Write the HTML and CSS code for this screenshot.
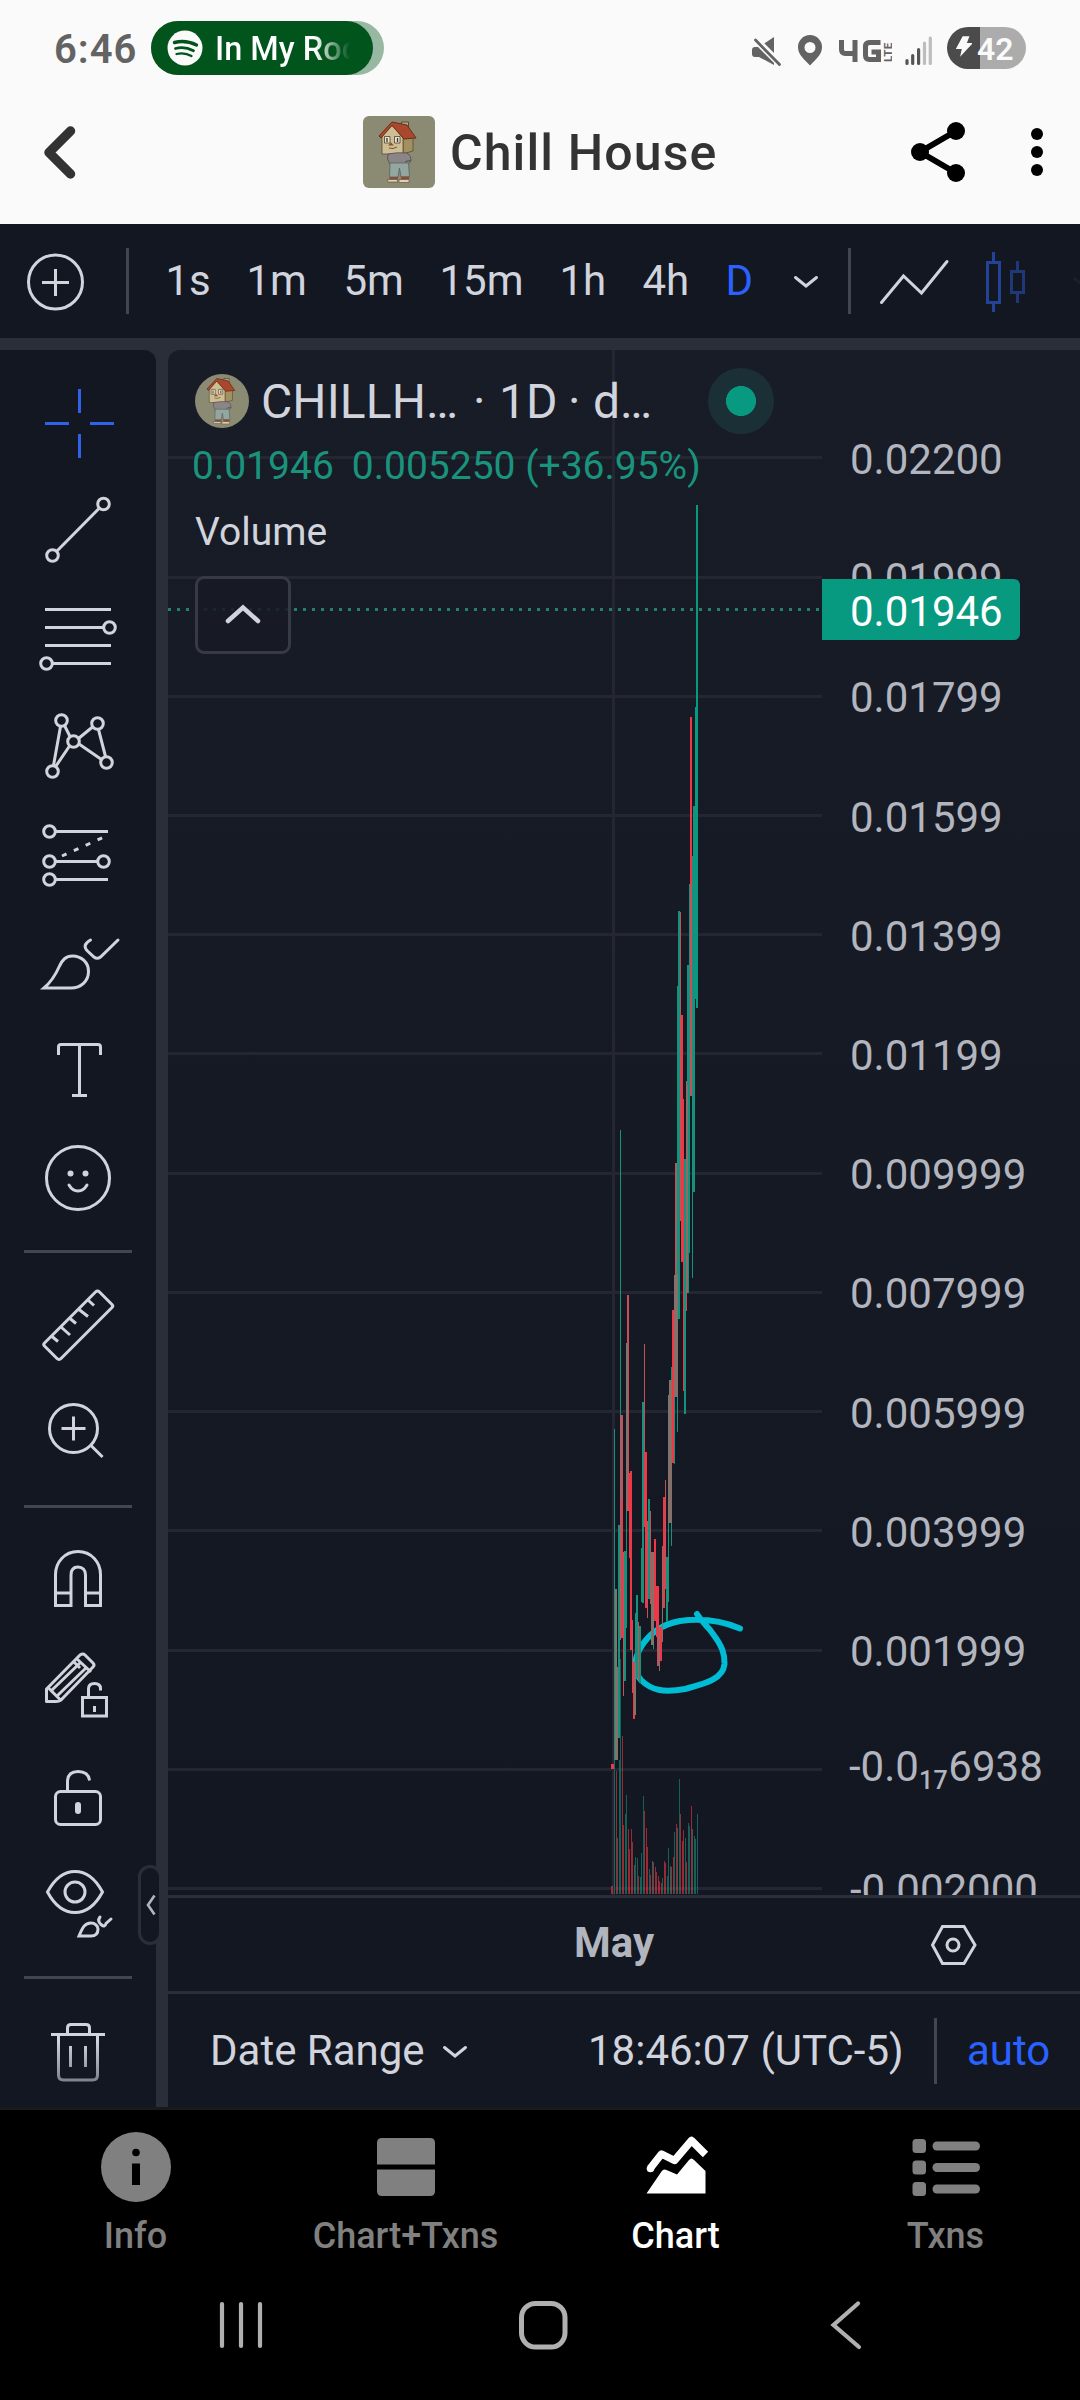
FILE: index.html
```html
<!DOCTYPE html>
<html lang="en">
<head>
<meta charset="utf-8">
<title>Chill House</title>
<link rel="stylesheet" href="styles.css">
</head>
<body>
<svg class="defs" aria-hidden="true">
  <symbol id="house" viewBox="0 0 72 72">
    <rect width="72" height="72" fill="#8b8a73"/>
    <path d="M38.500 6h7v11l-7-3z" fill="#b3a987" stroke="#5a4a35" stroke-width="1"/>
    <path d="M40 22l10-1v14l-10 3z" fill="#a1915f" stroke="#5a4a35" stroke-width=".8"/>
    <path d="M19 19l10-10 11 13v16H19z" fill="#cdbf93" stroke="#5a4a35" stroke-width=".8"/>
    <path d="M29 6l15 3 9 13-12 1L29 9.500 18 22l-2-2z" fill="#a8482c" stroke="#6b2e1c" stroke-width="1"/>
    <path d="M21.500 20.500h5.500v6.500h-5.500zM31.500 20.500h5.500v6.500h-5.500z" fill="#ece6cf" stroke="#4a3c2a" stroke-width=".8"/>
    <path d="M24 22v4M34.500 22v4" stroke="#333" stroke-width="1.300"/>
    <path d="M25 29.500l3-3 3 3z" fill="#96492b"/>
    <path d="M26 32q4 1.500 8-1" fill="none" stroke="#5a4a35" stroke-width=".9"/>
    <path d="M25 38q9-2 19-1 5 3 4 8l-3 3q-9 1-18 0-4-5-2-10z" fill="#8b8587" stroke="#504b4b" stroke-width=".8"/>
    <path d="M42 46q3-2 6-1" fill="none" stroke="#504b4b"/>
    <path d="M27 47h18.500l1 14h-8.500l-1.500-9-1.500 9h-8.500z" fill="#93a69f" stroke="#56645f" stroke-width=".8"/>
    <path d="M27 61h8v2.500h-9zM38 60.500h8v3h-8z" fill="#8a4c34"/>
    <path d="M24.500 63.500h9.500l1 2.500H25zM36 63.500h10v3H36z" fill="#ddd0b8" stroke="#5a4a35" stroke-width=".6"/>
  </symbol>
</svg>

<header class="top">
  <div class="status">
    <span class="clock">6:46</span>
    <span class="pill"><span class="pill-in">
      <svg class="spotify" viewBox="0 0 36 36"><circle cx="18" cy="18" r="17.500" fill="#fafafa"/><g fill="none" stroke="#00541c" stroke-linecap="round"><path d="M7.500 12.500q11-3 22 2.500" stroke-width="3.400"/><path d="M8.500 18.500q9-2.500 18 2.200" stroke-width="2.800"/><path d="M9.500 24q8-2 15 2" stroke-width="2.300"/></g></svg>
      <span class="song">In My Roo</span>
    </span></span>
    <svg class="sysicons" viewBox="744 18 148 56" fill="#636363">
      <path d="M752 48q0-3 3-3h4l15-10v28l-15-8h-4q-3 0-3-3z"/>
      <path d="M753 35l29 29" stroke="#fafafa" stroke-width="7"/><path d="M755.500 38l24 24.500" stroke="#636363" stroke-width="2.800" stroke-linecap="round"/>
      <path fill-rule="evenodd" d="M810 33a12 12 0 0 1 12 12.500c0 8-9 14-12 18-3-4-12-10-12-18A12 12 0 0 1 810 33zm0 7a5.500 5.500 0 1 0 0 11 5.500 5.500 0 0 0 0-11z"/>
      <path d="M841.500 38v9.500q0 4 4 4h11.500M855 38v22M880.500 40.500h-11q-4 0-4 4v9q0 4 4 4h9V50h-7" fill="none" stroke="#636363" stroke-width="5"/>
      <text class="lte" transform="translate(891.500 60) rotate(-90)">LTE</text>
    </svg>
    <svg class="signal" viewBox="900 18 38 56" fill="none" stroke-width="3.200" stroke-linecap="round"><path d="M907 58.500v3M912.700 53.500v8M918.600 47.500v14" stroke="#555"/><path d="M924.500 41v20.500M930.300 36v25.500" stroke="#bdbdbd"/></svg>
    <span class="battery"><svg viewBox="0 0 20 24"><path d="M9 0h8l-3 8h7L6 24l2-9H1z" fill="#fafafa"/></svg><b>42</b></span>
  </div>
  <div class="appbar">
    <svg class="back" viewBox="40 120 40 64"><path d="M70.500 131L49 152.500 70.500 174" fill="none" stroke="#333" stroke-width="9.500" stroke-linecap="round" stroke-linejoin="round"/></svg>
    <svg class="token"><use href="#house"/></svg>
    <h1>Chill House</h1>
    <svg class="share" viewBox="905 116 66 72"><path d="M956 131l-36 21 36 21" fill="none" stroke="#000" stroke-width="6"/><circle cx="956" cy="131" r="9"/><circle cx="920" cy="152" r="9"/><circle cx="956" cy="173" r="9"/></svg>
    <svg class="more" viewBox="1028 116 18 72"><circle cx="1037" cy="134" r="6"/><circle cx="1037" cy="152" r="6"/><circle cx="1037" cy="170" r="6"/></svg>
  </div>
</header>

<nav class="toolbar">
  <svg class="add" viewBox="24 250 64 64"><g fill="none" stroke="#d1d4dc" stroke-width="3"><circle cx="55.500" cy="282" r="27"/><path d="M42 282.500h27M55.500 269v27"/></g></svg>
  <i class="vsep"></i>
  <div class="frames"><span>1s</span><span>1m</span><span>5m</span><span>15m</span><span>1h</span><span>4h</span><span class="on">D</span></div>
  <svg class="chev" viewBox="790 270 32 22"><path d="M795.500 277.500l10.500 8.500 10.500-8.500" fill="none" stroke="#d1d4dc" stroke-width="3" stroke-linecap="round"/></svg>
  <i class="vsep sep2"></i>
  <svg class="styles" viewBox="870 240 210 80" fill="none" stroke-width="3"><path d="M881.500 301.500l22-26.500 18 17 25.500-31.500" stroke="#d1d4dc" stroke-linecap="round"/><path d="M987.500 261.500h12v40h-12zM993.500 251v10M993.500 302v9" stroke="#234399"/><path d="M1011.500 270.500h12v21h-12zM1017.500 260v10M1017.500 292v10" stroke="#203778"/><path d="M1074 277l6 5" stroke="#1b202d"/></svg>
</nav>

<main class="workspace">
  <aside class="tools">
    <svg height="126" viewBox="0 350 156 126"><path class="blue" d="M79.500 389v24M79.500 434v24M45 423.500h24M90 423.500h24"/></svg>
    <svg height="107" viewBox="0 476 156 107"><circle cx="103.500" cy="504" r="5.800"/><circle cx="52.500" cy="555.500" r="5.800"/><path d="M56.500 551.500l43-43.500"/></svg>
    <svg height="107" viewBox="0 583 156 107"><path d="M45 609.500h66M45 627.500h58M45 645.500h66M52 663.500h59"/><circle cx="109.500" cy="627.500" r="5.800"/><circle cx="46.500" cy="663.500" r="5.800"/></svg>
    <svg height="110" viewBox="0 690 156 110"><circle cx="61.500" cy="720.500" r="5.800"/><circle cx="97.500" cy="723.500" r="5.800"/><circle cx="73.500" cy="741.500" r="5.800"/><circle cx="52.500" cy="771.500" r="5.800"/><circle cx="106.500" cy="762.500" r="5.800"/><path d="M60.500 726.500l-7 39M64.500 725.500l5.500 11M78.500 738.500l14-11.500M69.500 746l-13.500 20M79 744l22.500 15.500M98.500 729.500l7 27"/></svg>
    <svg height="110" viewBox="0 800 156 110"><path d="M55.500 831.500H108M55.500 861.500h42M55.500 879.500H108"/><circle cx="49.500" cy="831.500" r="5.800"/><circle cx="49.500" cy="861.500" r="5.800"/><circle cx="103.500" cy="861.500" r="5.800"/><circle cx="49.500" cy="879.500" r="5.800"/><path d="M62 856l41-18.500" stroke-dasharray="5 8"/></svg>
    <svg height="106" viewBox="0 910 156 106"><path d="M44 988h27c10 0 17.500-7 17.500-16.500S81 956 72.500 956c-7 0-10 4-13 10C56 974 51 982 44 988z"/><path d="M90.500 940q-9 5-3 11l6.500 6q3 2.500 6.500 0L118 940" stroke-linecap="round"/></svg>
    <svg height="106" viewBox="0 1016 156 106"><path d="M58.500 1055v-8q0-2.500 2.500-2.500h37q2.500 0 2.500 2.500v8M79.500 1045v50M72 1095.500h15"/></svg>
    <svg height="112" viewBox="0 1122 156 112"><circle cx="78" cy="1178" r="31.500"/><path d="M69 1185q3.500 6 9 6t9-6" stroke-linecap="round"/><circle class="dot" cx="70.500" cy="1173.500" r="3"/><circle class="dot" cx="85.500" cy="1173.500" r="3"/></svg>
    <hr>
    <svg height="106" viewBox="0 1269 156 106"><path stroke-linejoin="round" d="M44.500 1343l51-51q2-2 4 0l12.500 12.500q1.500 1.500 0 3l-51 51q-2 2-4 0L44.500 1346q-1.500-1.500 0-3zM52 1336.500l6 5M61 1327l9 8M70 1318.500l6 5M79 1309.500l9 7M88 1300l6 5.500"/></svg>
    <svg height="114" viewBox="0 1375 156 114"><circle cx="73.500" cy="1428.500" r="24"/><path d="M63 1428.500h21M73.500 1418v21M91.500 1446l10 10" stroke-linecap="square"/></svg>
    <hr>
    <svg height="104" viewBox="0 1524 156 104"><path d="M55.500 1605.500v-31c0-12 9-23 22.500-23s22.500 11 22.500 23v31h-15V1575c0-5-3-8-7.500-8s-7 3-7 8v30.500zM55.500 1593h15M85.500 1593h15"/></svg>
    <svg height="108" viewBox="0 1628 156 108"><path stroke-linejoin="round" d="M46.500 1689l33.500-34q3-2 5 0l8 8q2 2 0 4l-32 33q-2 1.500-5 1.500h-9.500zM48 1687.500l13 13M77 1659l14 13M74 1662l6 6M52 1690l29-28M57 1696l30-29"/><path class="cut" d="M78 1688h8v-8h20v10h4v30H78z"/><path d="M82.500 1697.500h24v18.500h-24zM88.500 1697v-8q0-5.500 6-5.500t6 5v2"/><path class="dot" d="M93 1706h3v6h-3z"/></svg>
    <svg height="108" viewBox="0 1736 156 108"><rect x="55.500" y="1791.500" width="45" height="33" rx="5"/><path d="M67.500 1790v-8q0-10.500 10.500-10.500t11.500 9"/><rect class="dot" x="75" y="1802" width="6" height="12" rx="3"/></svg>
    <svg height="116" viewBox="0 1844 156 116"><path d="M47.500 1892q11-20.500 27.500-20.500T102.500 1892q-11 20.500-27.500 20.500T47.500 1892z"/><circle cx="75" cy="1892" r="10"/><path d="M79 1936h12c5 0 7-3 7-7 0-3-3-6-7-6-7 0-9 6-12 13z"/><path d="M100 1917q-3 4 1 7.500t5-1l5-4.500" stroke-linecap="round"/></svg>
    <hr>
    <svg height="113" viewBox="0 1994 156 113"><defs><linearGradient id="fade" gradientUnits="userSpaceOnUse" x1="0" y1="2040" x2="0" y2="2084"><stop stop-color="#d1d4dc"/><stop offset="1" stop-color="#777a84"/></linearGradient></defs><path stroke="url(#fade)" d="M58.500 2034v40q0 5 5 5h29q5 0 5-5v-40M70.500 2045v21M85.500 2045v21"/><path d="M51 2033.500h54M67.500 2032v-5q0-3.500 3.500-3.500h15q3.500 0 3.500 3.500v5"/></svg>
    <button class="collapse"><svg viewBox="0 0 10 22"><path d="M8.500 1.500L2 11l6.500 9.500" fill="none" stroke="#b2b5be" stroke-width="2.600"/></svg></button>
  </aside>

  <section class="panel">
    <div class="plotrow">
      <div class="plot">
        <svg id="chart" viewBox="168 350 654 1545"></svg>
        <div class="legend">
          <div class="symbol"><svg class="round"><use href="#house"/></svg><span class="name">CHILLH…</span><span class="mid">·</span><span class="iv">1D</span><span class="mid2">·</span><span class="desc">d…</span><i class="live"></i></div>
          <div class="vals"><span>0.01946</span><span>0.005250 (+36.95%)</span></div>
          <div class="vol">Volume</div>
          <button class="fold"><svg viewBox="0 0 36 20"><path d="M3 17L18 3.500 33 17" fill="none" stroke="#d1d4dc" stroke-width="4.500" stroke-linecap="round"/></svg></button>
        </div>
      </div>
      <div class="axis">
        <span>0.02200</span><span>0.01999</span><span>0.01799</span><span>0.01599</span><span>0.01399</span><span>0.01199</span><span>0.009999</span><span>0.007999</span><span>0.005999</span><span>0.003999</span><span>0.001999</span><span class="tiny">-0.0<small>17</small>6938</span><span>-0.002000</span>
        <b class="price">0.01946</b>
      </div>
    </div>
    <div class="timeaxis"><b>May</b><svg viewBox="928 1921 50 48"><path d="M942.500 1926.500h21.500l11 18.500-11 18.500h-21.500L932.500 1945z" fill="none" stroke="#d1d4dc" stroke-width="3"/><circle cx="953" cy="1945" r="6" fill="none" stroke="#d1d4dc" stroke-width="3"/></svg></div>
    <div class="foot"><span class="range">Date Range</span><svg class="chev" viewBox="790 270 32 22"><path d="M795.500 277.500l10.500 8.500 10.500-8.500" fill="none" stroke="#d1d4dc" stroke-width="3" stroke-linecap="round"/></svg><span class="time">18:46:07 (UTC-5)</span><i class="vsep"></i><span class="auto">auto</span></div>
  </section>
</main>

<nav class="tabs">
  <a><svg viewBox="0 0 72 72"><circle cx="36" cy="36" r="35"/><circle cx="36" cy="21.500" r="3.800" fill="#000"/><path d="M32 32.500h8v21.500h-8z" fill="#000"/></svg>Info</a>
  <a><svg viewBox="0 0 72 72"><path d="M7 12q0-5 5-5h48q5 0 5 5v21.500H7zM7 38.500h58V60q0 5-5 5H12q-5 0-5-5z"/></svg>Chart+Txns</a>
  <a class="active"><svg viewBox="0 0 72 72"><path d="M6.500 62.500l15-22q2-3 5-1.500L37 43.500 49 29q2.500-3 5 0l11.500 11v22.500z"/><path d="M10.500 37l11-14 13 6.500 17-20 14 14" fill="none" stroke="#fff" stroke-width="7.500" stroke-linejoin="round"/><circle cx="10.500" cy="37.500" r="3.800"/></svg>Chart</a>
  <a><svg viewBox="0 0 72 72"><rect x="2.500" y="8" width="13.500" height="14" rx="3.500"/><rect x="2.500" y="29.500" width="13.500" height="14" rx="3.500"/><rect x="2.500" y="51" width="13.500" height="14" rx="3.500"/><rect x="22.500" y="10.500" width="47.500" height="9" rx="4.500"/><rect x="22.500" y="32" width="47.500" height="9" rx="4.500"/><rect x="22.500" y="53.500" width="47.500" height="9" rx="4.500"/></svg>Txns</a>
</nav>
<footer class="system">
  <svg viewBox="0 2265 1080 120" fill="none" stroke="#b0b0b0" stroke-width="4.200" stroke-linecap="round"><path d="M222 2304v42M241 2304v42M260 2304v42"/><rect x="521.500" y="2303.500" width="43.500" height="43.500" rx="14" stroke-width="5"/><path d="M858 2303.500L833.500 2325l25.500 22"/></svg>
</footer>
<script src="chart.js"></script>
</body>
</html>
```
FILE: styles.css
```css
* { box-sizing: border-box; }
body { margin: 0; width: 1080px; height: 2400px; background: #000; font-family: Roboto, "Noto Sans", sans-serif; overflow: hidden; }
svg { display: block; flex: none; }
.defs { position: absolute; width: 0; height: 0; }
button { padding: 0; font: inherit; }

.top { height: 224px; background: #fafafa; }
.status { display: flex; height: 96px; align-items: center; padding-left: 54px; }
.clock { width: 97px; padding-top: 3px; font-size: 40px; font-weight: 600; line-height: 50px; color: #636363; letter-spacing: 1px; }
.pill { width: 233px; height: 54px; border-radius: 27px; background: #98b8a2; }
.pill-in { display: flex; align-items: center; width: 222px; height: 54px; padding-left: 16px; border-radius: 27px; background: #00541c; overflow: hidden; }
.spotify { width: 36px; height: 36px; margin-right: 12px; }
.song { width: 136px; padding-top: 1px; overflow: hidden; white-space: nowrap; font-size: 32.500px; font-weight: 500; background: linear-gradient(90deg, #fff 100px, transparent 135px); background-clip: text; color: transparent; }
.sysicons { width: 148px; height: 56px; margin-left: 360px; }
.lte { font: 700 11.500px Roboto, sans-serif; letter-spacing: .3px; }
.signal { width: 38px; height: 56px; margin: 0 9px 0 8px; }
.battery { display: flex; align-items: center; width: 79px; height: 42px; border-radius: 21px; background: linear-gradient(90deg, #4b4b4b 32.500px, #acacac 32.500px); color: #fafafa; }
.battery svg { width: 17px; height: 23px; margin: 0 5px 3px 8px; }
.battery b { padding-top: 1px; font-size: 32px; line-height: 42px; font-weight: 600; }
.appbar { display: flex; align-items: center; height: 112px; padding-left: 40px; }
.back { width: 40px; height: 64px; margin-right: 283px; }
.token { width: 72px; height: 72px; border-radius: 6px; }
.appbar h1 { width: 455px; margin: 0 0 0 15px; padding-top: 2px; font-size: 50px; line-height: 72px; font-weight: 500; color: #333; letter-spacing: 1.100px; }
.share { width: 66px; height: 72px; margin-right: 57px; }
.more { width: 18px; height: 72px; }

.toolbar { display: flex; align-items: center; height: 114px; padding-left: 24px; background: #131722; color: #d1d4dc; font-size: 42px; }
.add { width: 64px; height: 64px; margin: 2px 38px 0 0; }
.vsep { display: block; flex: none; width: 3px; height: 66px; background: #434651; }
.frames { display: grid; grid-template-columns: 81px 97px 96px 120px 83px 83px 64px; margin-left: 36.500px; line-height: 114px; }
.on, .auto { color: #2962ff; }
.chev { width: 32px; height: 22px; }
.sep2 { margin-left: 26.500px; }
.styles { width: 210px; height: 80px; margin-left: 19px; }

.workspace { display: flex; gap: 12px; height: 1772px; padding-top: 12px; background: #2a2e39; border-bottom: 3px solid #1a1a1a; }
.tools { position: relative; width: 156px; height: 1757px; border-top-right-radius: 12px; background: #131722; }
.tools > svg { width: 156px; fill: none; stroke: #d1d4dc; stroke-width: 3px; }
.tools .blue { stroke: #2f62e8; }
.tools .dot { fill: #d1d4dc; stroke: none; }
.tools .cut { fill: #131722; stroke: none; }
.tools hr { width: 108px; height: 3px; margin: 16px 24px; border: 0; background: #434651; }
.collapse { position: absolute; left: 138px; top: 1515px; display: flex; align-items: center; justify-content: center; width: 24px; height: 80px; border: 3px solid #2a2e39; border-radius: 13px; background: #131722; }
.collapse svg { width: 10px; height: 22px; margin-left: 2px; }

.panel { width: 912px; border-top-left-radius: 12px; background: linear-gradient(#181c27, #131722 1545px); overflow: hidden; color: #d1d4dc; font-size: 42px; }
.plotrow { display: flex; height: 1545px; }
.plot { position: relative; width: 654px; }
#chart { width: 654px; height: 1545px; }
.legend { position: absolute; left: 26px; top: 18px; }
.symbol { display: flex; align-items: center; height: 66px; font-size: 48px; }
.round { width: 54px; height: 54px; margin-left: 1px; border-radius: 50%; }
.name { width: 212px; margin-left: 12px; letter-spacing: .1px; }
.mid { width: 26px; }
.iv { width: 69px; }
.mid2 { width: 24px; }
.desc { width: 116px; padding-left: 1px; }
.live { width: 66px; height: 66px; border-radius: 50%; background: radial-gradient(circle, #089981 14.700px, #1a3036 15.300px); }
.vals { display: flex; gap: 18px; height: 64px; margin-left: -2px; line-height: 64px; font-size: 39px; color: #1a937d; white-space: nowrap; }
.vol { height: 76px; padding: 11px 0 0 1px; line-height: 46px; font-size: 39px; }
.fold { display: flex; align-items: center; justify-content: center; width: 96px; height: 78px; margin: 2px 0 0 1px; border: 3px solid #363a45; border-radius: 9px; background: #181a26e0; }
.fold svg { width: 36px; height: 20px; margin-bottom: 2px; }
.axis { position: relative; display: flex; flex-direction: column; width: 258px; height: 1545px; padding-top: 50px; overflow: hidden; color: #b2b5be; }
.axis span { flex: none; height: 119.200px; padding-left: 28px; line-height: 119.200px; }
.axis .tiny { padding-left: 27px; line-height: 111px; }
.tiny small { font-size: 25px; font-weight: 500; letter-spacing: .5px; position: relative; top: 8px; line-height: 1; }
.price { position: absolute; left: 0; top: 229px; width: 198px; height: 61px; padding-left: 28px; border-radius: 0 6px 6px 0; background: #089981; color: #fff; font-weight: 400; line-height: 65px; }
.timeaxis { display: flex; align-items: center; height: 99px; border: solid #2a2e39; border-width: 3px 0; background: #131722; color: #b2b5be; }
.timeaxis b { width: 200px; margin: 0 214px 0 346px; padding-bottom: 4px; text-align: center; line-height: 89px; }
.timeaxis svg { width: 50px; height: 48px; }
.foot { display: flex; align-items: center; height: 113px; background: #131722; white-space: nowrap; }
.range { width: 271px; padding-left: 42px; }
.time { width: 346px; margin-left: 117px; }
.auto { margin-left: 30px; }

.tabs { display: grid; grid-template-columns: 271px 269px 271px 269px; height: 155px; padding-top: 21px; background: #000; }
.tabs a { display: flex; flex-direction: column; align-items: center; font-size: 36px; font-weight: 500; line-height: 42px; color: #808080; }
.tabs svg { width: 72px; height: 72px; margin-bottom: 12px; fill: #808080; }
.tabs .active { color: #fff; }
.tabs .active svg { fill: #fff; }
.system svg { width: 1080px; height: 120px; }
```
FILE: chart.js
```js
const NS = "http://www.w3.org/2000/svg";
const chart = document.getElementById("chart");
function add(tag, attrs) {
  const el = document.createElementNS(NS, tag);
  for (const k in attrs) el.setAttribute(k, attrs[k]);
  chart.appendChild(el);
}
const colors = { g: "#16927c", G: "#089981", r: "#ee3848", d: "#c3505a", m: "#86706a" };

// Grid
[456, 576, 695, 814, 933, 1052, 1172, 1291, 1410, 1529, 1649, 1768, 1887].forEach(y =>
  add("rect", { x: 168, y, width: 654, height: 3, fill: "#242731" }));
add("rect", { x: 612, y: 350, width: 3, height: 1545, fill: "#242731" });

// Last price
add("path", { d: "M168 609.500H822", stroke: "#23806f", "stroke-width": 3, "stroke-dasharray": "3 6" });

// Volume: x offset from 590, top, colour
const volume = [
  [21, 1886, "r"], [22, 1886, "r"], [24, 1760, "g"], [26, 1771, "r"], [27, 1838, "m"], [29, 1760, "g"], [30, 1659, "g"],
  [32, 1736, "r"], [33, 1825, "r"], [35, 1814, "g"], [36, 1795, "g"], [38, 1829, "r"], [39, 1849, "r"],
  [41, 1829, "r"], [42, 1842, "r"], [44, 1865, "m"], [45, 1857, "g"], [47, 1858, "g"], [48, 1876, "r"],
  [50, 1877, "g"], [51, 1853, "g"], [53, 1796, "g"], [54, 1811, "r"], [56, 1828, "r"], [57, 1847, "r"],
  [59, 1869, "g"], [60, 1875, "r"], [62, 1861, "m"], [63, 1862, "m"], [65, 1867, "r"], [66, 1872, "r"],
  [68, 1876, "r"], [69, 1881, "r"], [71, 1883, "r"], [72, 1878, "g"], [74, 1861, "r"], [75, 1863, "r"],
  [77, 1876, "g"], [78, 1848, "g"], [80, 1866, "m"], [81, 1867, "m"], [83, 1857, "r"], [84, 1832, "g"],
  [86, 1824, "r"], [87, 1828, "m"], [89, 1779, "g"], [90, 1814, "r"], [92, 1841, "r"], [93, 1830, "r"],
  [95, 1838, "g"], [96, 1862, "r"], [98, 1823, "g"], [99, 1826, "g"], [101, 1806, "r"], [102, 1829, "m"],
  [104, 1836, "g"], [105, 1839, "g"], [107, 1814, "g"]
];
volume.forEach(([x, y, c]) => add("rect", { x: 590 + x, y, width: 1, height: 1894 - y, fill: colors[c], opacity: 0.6 }));

// Brush drawing
add("path", {
  d: "M697 1614C703 1624 708 1626 713 1634C722 1646 725 1654 724.500 1664C723 1680 703 1684 685 1689C663 1693 651 1690 641 1680C633 1671 634 1659 641 1647C650 1632 664 1624 680 1621C702 1618 722 1621 740 1628.500",
  fill: "none", stroke: "#00bcd4", "stroke-width": 6, "stroke-linecap": "round"
});

// Candles: x offset from 590, width, top, bottom, colour
const candles = [
  [21, 3, 1764, 1769, "r"], [24, 1, 1429, 1760, "g"], [25, 2, 1589, 1760, "m"], [27, 1, 1667, 1760, "m"],
  [28, 2, 1525, 1738, "g"], [30, 1, 1130, 1640, "g"], [30, 1, 1415, 1640, "m"], [31, 2, 1415, 1638, "d"],
  [31, 2, 1500, 1638, "r"], [33, 1, 1552, 1696, "d"], [34, 2, 1551, 1681, "g"], [36, 1, 1343, 1511, "m"],
  [36, 1, 1511, 1628, "g"], [37, 2, 1295, 1511, "d"], [37, 1, 1343, 1511, "m"], [39, 1, 1473, 1558, "r"],
  [38, 1, 1480, 1511, "r"], [40, 2, 1471, 1650, "r"], [42, 1, 1620, 1693, "d"], [43, 2, 1662, 1719, "r"],
  [44, 2, 1663, 1715, "m"], [45, 1, 1613, 1663, "g"], [46, 2, 1595, 1678, "g"], [48, 1, 1622, 1680, "d"],
  [49, 2, 1626, 1683, "g"], [51, 1, 1548, 1602, "g"], [52, 2, 1402, 1603, "g"], [54, 1, 1344, 1452, "d"],
  [54, 3, 1452, 1527, "r"], [55, 2, 1527, 1608, "r"], [57, 1, 1521, 1618, "d"], [58, 2, 1499, 1599, "g"],
  [60, 1, 1511, 1604, "d"], [61, 3, 1552, 1645, "m"], [63, 1, 1645, 1649, "g"], [64, 2, 1539, 1621, "r"],
  [66, 3, 1586, 1637, "r"], [67, 2, 1637, 1666, "d"], [69, 1, 1627, 1671, "m"], [70, 2, 1627, 1661, "r"],
  [72, 1, 1546, 1642, "m"], [73, 2, 1497, 1608, "r"], [75, 1, 1480, 1589, "d"], [76, 2, 1557, 1622, "g"],
  [78, 1, 1523, 1602, "g"], [78, 1, 1395, 1523, "m"], [79, 3, 1380, 1523, "m"], [81, 1, 1367, 1380, "g"],
  [81, 1, 1523, 1546, "g"], [82, 2, 1310, 1463, "r"], [84, 1, 1275, 1397, "m"], [84, 1, 1397, 1464, "g"],
  [85, 1, 1163, 1275, "d"], [86, 1, 1163, 1275, "m"], [85, 3, 1275, 1397, "m"], [87, 1, 986, 1275, "g"],
  [87, 1, 1397, 1432, "g"], [88, 2, 911, 1319, "g"], [90, 1, 912, 1221, "d"], [91, 2, 1015, 1262, "r"],
  [93, 1, 1099, 1391, "r"], [94, 2, 1159, 1414, "g"], [96, 1, 1081, 1293, "m"], [96, 1, 1293, 1311, "d"],
  [97, 2, 965, 1293, "g"], [97, 1, 1085, 1293, "m"], [99, 1, 884, 1253, "g"], [100, 2, 717, 884, "r"],
  [100, 2, 884, 1096, "d"], [102, 1, 856, 1278, "g"], [103, 2, 806, 1192, "g"], [105, 1, 707, 999, "G"],
  [106, 2, 505, 1008, "G"]
];
candles.forEach(([x, w, top, bottom, c]) =>
  add("rect", { x: 590 + x, y: top, width: w, height: bottom - top, fill: colors[c] }));
```
